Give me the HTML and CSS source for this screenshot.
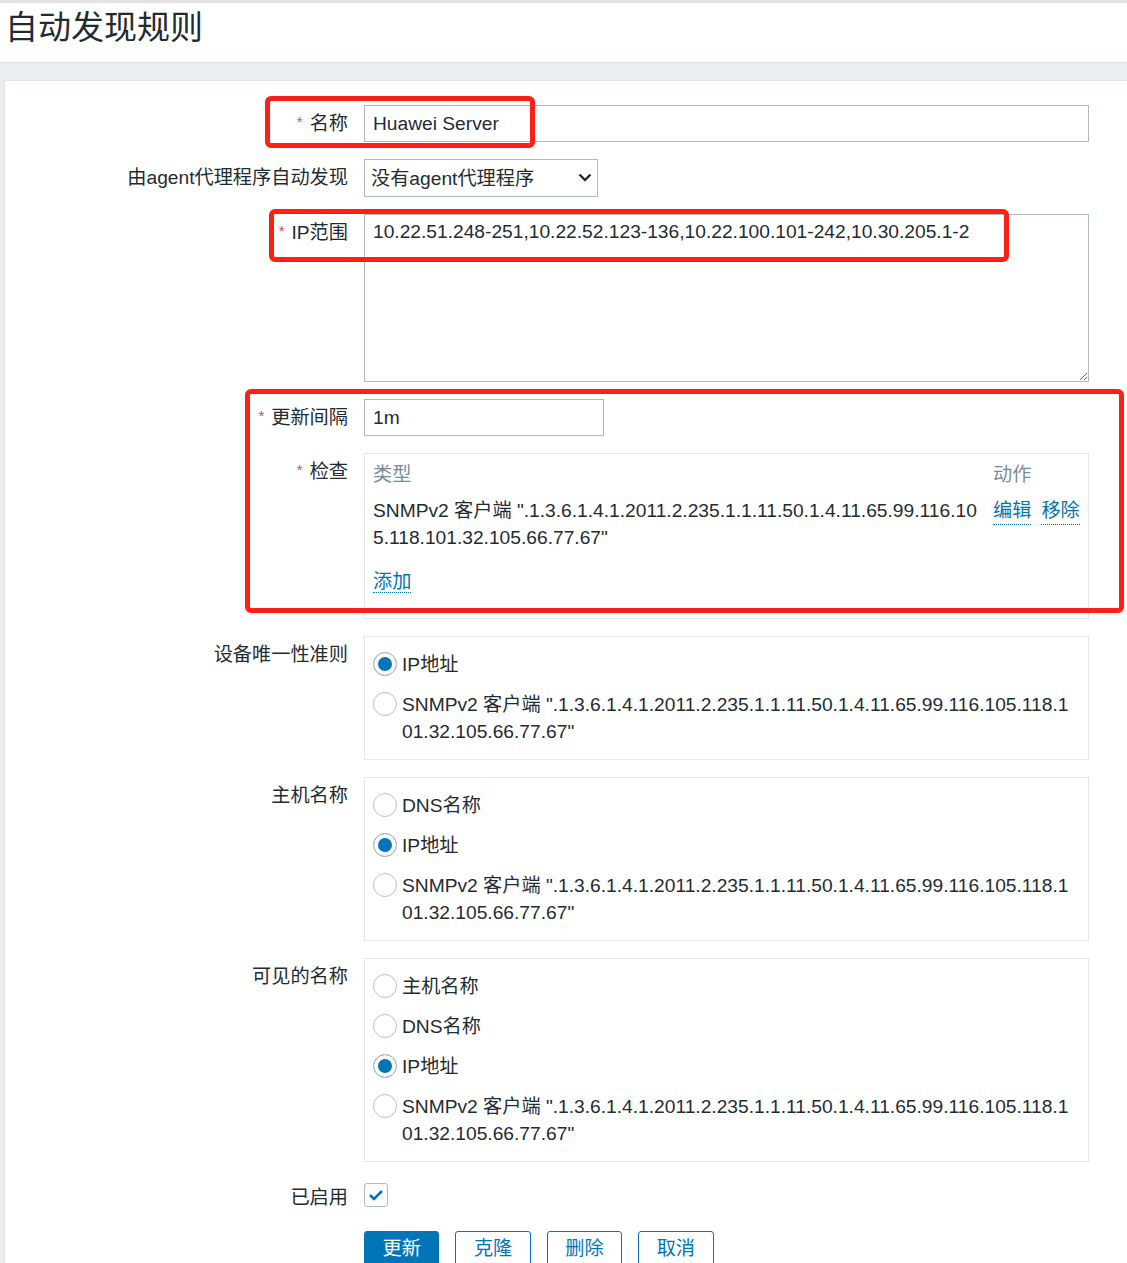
FILE: index.html
```html
<!DOCTYPE html>
<html lang="zh-CN">
<head>
<meta charset="utf-8">
<title>自动发现规则</title>
<link rel="stylesheet" href="styles.css">
</head>
<body>
<header class="title-bar">
  <h1 class="page-title">自动发现规则</h1>
</header>
<div class="page-body">
  <div class="panel">
    <form class="form-list">
      <div class="form-row">
        <label class="form-label"><span class="req">*</span>名称</label>
        <div class="form-field"><input class="text-input input-wide" type="text" value="Huawei Server"></div>
      </div>

      <div class="form-row">
        <label class="form-label">由agent代理程序自动发现</label>
        <div class="form-field">
          <div class="select-wrap">
            <select class="select-input"><option>没有agent代理程序</option></select>
            <svg class="select-arrow" width="14" height="9" viewBox="0 0 14 9"><polyline points="1.5,1.5 7,7 12.5,1.5" fill="none" stroke="#1f2c33" stroke-width="2.4"/></svg>
          </div>
        </div>
      </div>

      <div class="form-row">
        <label class="form-label"><span class="req">*</span>IP范围</label>
        <div class="form-field"><textarea class="text-area">10.22.51.248-251,10.22.52.123-136,10.22.100.101-242,10.30.205.1-2</textarea></div>
      </div>

      <div class="form-row">
        <label class="form-label"><span class="req">*</span>更新间隔</label>
        <div class="form-field"><input class="text-input input-short" type="text" value="1m"></div>
      </div>

      <div class="form-row">
        <label class="form-label"><span class="req">*</span>检查</label>
        <div class="form-field">
          <div class="subform checks">
            <div class="checks-grid">
              <div class="checks-head">类型</div>
              <div class="checks-head">动作</div>
              <div class="check-type">SNMPv2 客户端 ".1.3.6.1.4.1.2011.2.235.1.1.11.50.1.4.11.65.99.116.105.118.101.32.105.66.77.67"</div>
              <div class="check-actions"><a class="link" href="#">编辑</a><a class="link" href="#">移除</a></div>
            </div>
            <div class="checks-foot"><a class="link" href="#">添加</a></div>
          </div>
        </div>
      </div>

      <div class="form-row">
        <label class="form-label">设备唯一性准则</label>
        <div class="form-field">
          <ul class="subform radio-list">
            <li><label class="radio"><span class="radio-mark checked"></span><span class="radio-text">IP地址</span></label></li>
            <li><label class="radio"><span class="radio-mark"></span><span class="radio-text">SNMPv2 客户端 ".1.3.6.1.4.1.2011.2.235.1.1.11.50.1.4.11.65.99.116.105.118.101.32.105.66.77.67"</span></label></li>
          </ul>
        </div>
      </div>

      <div class="form-row">
        <label class="form-label">主机名称</label>
        <div class="form-field">
          <ul class="subform radio-list">
            <li><label class="radio"><span class="radio-mark"></span><span class="radio-text">DNS名称</span></label></li>
            <li><label class="radio"><span class="radio-mark checked"></span><span class="radio-text">IP地址</span></label></li>
            <li><label class="radio"><span class="radio-mark"></span><span class="radio-text">SNMPv2 客户端 ".1.3.6.1.4.1.2011.2.235.1.1.11.50.1.4.11.65.99.116.105.118.101.32.105.66.77.67"</span></label></li>
          </ul>
        </div>
      </div>

      <div class="form-row">
        <label class="form-label">可见的名称</label>
        <div class="form-field">
          <ul class="subform radio-list">
            <li><label class="radio"><span class="radio-mark"></span><span class="radio-text">主机名称</span></label></li>
            <li><label class="radio"><span class="radio-mark"></span><span class="radio-text">DNS名称</span></label></li>
            <li><label class="radio"><span class="radio-mark checked"></span><span class="radio-text">IP地址</span></label></li>
            <li><label class="radio"><span class="radio-mark"></span><span class="radio-text">SNMPv2 客户端 ".1.3.6.1.4.1.2011.2.235.1.1.11.50.1.4.11.65.99.116.105.118.101.32.105.66.77.67"</span></label></li>
          </ul>
        </div>
      </div>

      <div class="form-row">
        <label class="form-label">已启用</label>
        <div class="form-field">
          <span class="checkbox">
            <svg width="16" height="12" viewBox="0 0 16 12"><polyline points="2,6 6,10 14,2" fill="none" stroke="#0275b8" stroke-width="2.6"/></svg>
          </span>
        </div>
      </div>

      <div class="form-row buttons-row">
        <div class="form-label"></div>
        <div class="form-field buttons">
          <button type="button" class="btn btn-primary">更新</button>
          <button type="button" class="btn btn-alt">克隆</button>
          <button type="button" class="btn btn-alt">删除</button>
          <button type="button" class="btn btn-alt">取消</button>
        </div>
      </div>
    </form>
  </div>
</div>

<div class="annotation mark-name"></div>
<div class="annotation mark-ip"></div>
<div class="annotation mark-checks"></div>
</body>
</html>
```

FILE: styles.css
```css
html, body {
  margin: 0;
  padding: 0;
}
body {
  position: relative;
  overflow: hidden;
  background: #ffffff;
  color: #1f2c33;
  font-family: "Liberation Sans", "Noto Sans CJK SC", sans-serif;
  font-size: 19.2px;
  line-height: 27px;
}

.title-bar {
  border-top: 3px solid #e2e2e2;
  border-bottom: 1px solid #dde2e5;
  background: #ffffff;
}
.page-title {
  margin: 0;
  padding: 3px 6px 12px 5px;
  font-size: 33px;
  line-height: 44px;
  font-weight: normal;
  color: #1f2c33;
}

.page-body {
  background: #ebeef0;
  padding: 17px 0 0 4px;
}
.panel {
  background: #ffffff;
  border-top: 1px solid #dfe4e7;
  border-left: 1px solid #dfe4e7;
  padding: 24px 0 60px;
}

.form-list {
  display: grid;
  row-gap: 17px;
}
.form-row {
  display: grid;
  grid-template-columns: 343px 725px;
  column-gap: 16px;
  align-items: start;
}
.form-label {
  text-align: right;
  padding-top: 5px;
  line-height: 27px;
  white-space: nowrap;
}
.req {
  color: #e04848;
  font-size: 15px;
  margin-right: 7px;
  position: relative;
  top: -3px;
}

.text-input {
  box-sizing: border-box;
  height: 37px;
  border: 1px solid #acbbc2;
  padding: 0 8px;
  font-family: inherit;
  font-size: 19.2px;
  color: #1f2c33;
  background: #fff;
  outline: none;
  margin: 0;
  display: block;
}
.input-wide { width: 725px; }
.input-short { width: 240px; }

.select-wrap {
  position: relative;
  width: 234px;
}
.select-input {
  -webkit-appearance: none;
  appearance: none;
  box-sizing: border-box;
  width: 234px;
  height: 38px;
  border: 1px solid #acbbc2;
  border-radius: 0;
  padding: 0 30px 0 6px;
  font-family: inherit;
  font-size: 19.2px;
  color: #1f2c33;
  background: #fff;
  display: block;
  margin: 0;
}
.select-arrow {
  position: absolute;
  right: 6px;
  top: 14px;
  pointer-events: none;
}

.text-area {
  box-sizing: border-box;
  display: block;
  width: 725px;
  height: 168px;
  margin: 0;
  border: 1px solid #acbbc2;
  padding: 3px 8px;
  font-family: inherit;
  font-size: 19.2px;
  line-height: 27px;
  color: #1f2c33;
  resize: both;
  outline: none;
}

.subform {
  box-sizing: border-box;
  width: 725px;
  border: 1px solid #e3e7ea;
  margin: 0;
}

.checks {
  padding: 7px 8px 23px;
}
.checks-grid {
  display: grid;
  grid-template-columns: 610px 86px;
  column-gap: 10px;
  row-gap: 9px;
}
.checks-head {
  color: #768d99;
}
.check-type {
  word-break: break-all;
}
.check-actions {
  display: flex;
  align-items: flex-start;
  gap: 10px;
  white-space: nowrap;
}
.checks-foot {
  margin-top: 17px;
}
.link {
  color: #0275b8;
  text-decoration: none;
  border-bottom: 1px dotted #0275b8;
}

.radio-list {
  list-style: none;
  padding: 7px 8px 8px;
}
.radio-list li {
  padding: 6.5px 0;
}
.radio {
  display: flex;
  align-items: flex-start;
}
.radio-mark {
  flex: none;
  box-sizing: border-box;
  width: 24px;
  height: 24px;
  margin-top: 1.5px;
  margin-right: 5px;
  border: 1px solid #b4c2c8;
  border-radius: 50%;
  background: #ffffff;
}
.radio-mark.checked {
  background: #0275b8;
  box-shadow: inset 0 0 0 4px #ffffff;
}
.radio-text {
  word-break: break-all;
  min-width: 0;
  padding-right: 3px;
}

.checkbox {
  box-sizing: border-box;
  display: flex;
  align-items: center;
  justify-content: center;
  width: 24px;
  height: 24px;
  margin-top: 4px;
  border: 1px solid #acbbc2;
  border-radius: 3px;
  background: #fff;
}

.buttons-row {
  margin-top: 3px;
}
.buttons {
  display: flex;
  gap: 16px;
}
.btn {
  box-sizing: border-box;
  height: 36px;
  padding: 0 17.5px;
  border-radius: 3px;
  font-family: inherit;
  font-size: 19.2px;
  line-height: 34px;
  border: 1px solid #0275b8;
  margin: 0;
}
.btn-primary {
  background: #0275b8;
  color: #ffffff;
}
.btn-alt {
  background: #ffffff;
  color: #0275b8;
}

.annotation {
  position: absolute;
  box-sizing: border-box;
  border: 5px solid #ff1f14;
  border-radius: 6px;
  pointer-events: none;
}
.mark-name { left: 265px; top: 96px; width: 270px; height: 52px; }
.mark-ip { left: 269px; top: 209px; width: 740px; height: 53px; }
.mark-checks { left: 245px; top: 389px; width: 879px; height: 224px; }
```
